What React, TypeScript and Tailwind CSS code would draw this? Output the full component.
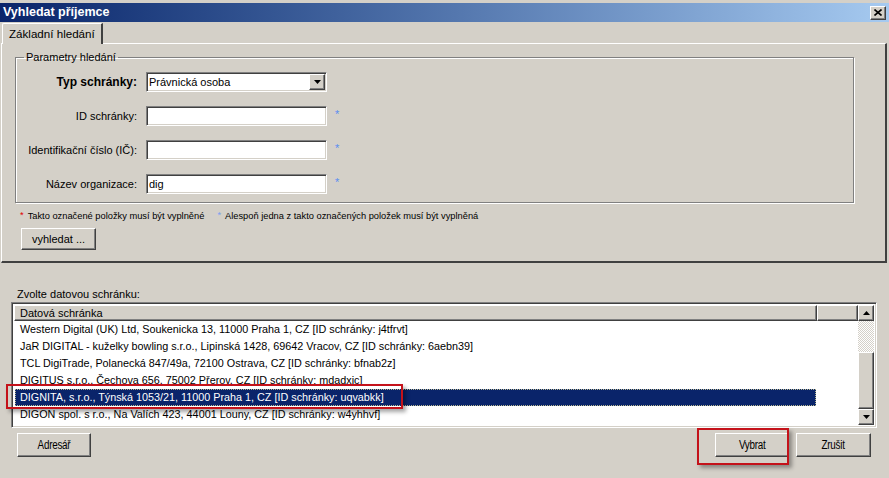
import React from "react";

const ROWS = [
  "Western Digital (UK) Ltd, Soukenicka 13, 11000 Praha 1, CZ [ID schránky: j4tfrvt]",
  "JaR DIGITAL - kuželky bowling s.r.o., Lipinská 1428, 69642 Vracov, CZ [ID schránky: 6aebn39]",
  "TCL DigiTrade, Polanecká 847/49a, 72100 Ostrava, CZ [ID schránky: bfnab2z]",
  "DIGITUS s.r.o., Čechova 656, 75002 Přerov, CZ [ID schránky: mdadxic]",
  "DIGNITA, s.r.o., Týnská 1053/21, 11000 Praha 1, CZ [ID schránky: uqvabkk]",
  "DIGON spol. s r.o., Na Valích 423, 44001 Louny, CZ [ID schránky: w4yhhvf]",
];

const raised =
  "border border-t-white border-l-white border-b-[#404040] border-r-[#404040] shadow-[inset_-1px_-1px_0_#808080]";
const sunken =
  "border border-t-[#808080] border-l-[#808080] border-b-white border-r-white shadow-[inset_1px_1px_0_#404040,inset_-1px_-1px_0_#d4d0c8]";

function Arrow({ up }: { up?: boolean }) {
  return (
    <svg width="7" height="4" viewBox="0 0 7 4">
      <path d={up ? "M3.5 0L7 4H0Z" : "M0 0H7L3.5 4Z"} fill="#000" />
    </svg>
  );
}

function Field({ label, bold, value, select }: { label: string; bold?: boolean; value?: string; select?: boolean }) {
  return (
    <div className="flex items-center h-[20px]">
      <div className={`w-[122px] text-right pr-[1px] ${bold ? "font-bold text-[12px]" : ""}`}>{label}</div>
      <div className={`ml-[8px] w-[181px] h-[20px] bg-white flex items-center ${sunken}`}>
        <span className="flex-1 pl-[2px] leading-none">{value}</span>
        {select && (
          <div className={`w-[16px] h-[16px] mr-[1px] bg-[#d4d0c8] flex items-center justify-center ${raised}`}>
            <Arrow />
          </div>
        )}
      </div>
      {!select && <span className="ml-[8px] -mt-[4px] text-[#5b8ef0] text-[11px] leading-none">*</span>}
    </div>
  );
}

export default function App() {
  return (
    <div
      className="relative w-[889px] h-[478px] bg-[#d4d0c8] text-black text-[11px] overflow-hidden flex flex-col"
      style={{ fontFamily: '"Liberation Sans", Arial, sans-serif' }}
    >
      {/* title bar */}
      <div className="h-[3px]" />
      <div className="h-[19px] flex items-center justify-between pl-[3px] pr-[3px] bg-gradient-to-r from-[#0a246a] to-[#a6caf0]">
        <span className="text-white font-bold text-[12.5px]">Vyhledat příjemce</span>
        <div className={`w-[16px] h-[14px] bg-[#d4d0c8] flex items-center justify-center ${raised}`}>
          <svg width="8" height="7" viewBox="0 0 8 7">
            <path d="M0.5 0.5L7.5 6.5M7.5 0.5L0.5 6.5" stroke="#000" strokeWidth="1.6" />
          </svg>
        </div>
      </div>

      {/* tabs */}
      <div className="mt-[1px] pl-[2px] h-[20px] flex">
        <div className="relative z-10 h-[21px] px-[6px] flex items-center bg-[#d4d0c8] border-l border-t border-white border-r-2 border-r-[#404040] rounded-tl-[2px] text-[11.6px]">
          Základní hledání
        </div>
      </div>

      <div className="ml-[1px] w-[886px] h-[220px] border-t border-l border-white border-r-2 border-r-[#404040] border-b-2 border-b-[#404040] pl-[13px] pt-[6px]">
        <fieldset className="w-[839px] h-[153px] border border-[#808080] shadow-[inset_1px_1px_0_#fff,1px_1px_0_#fff]">
          <legend className="ml-[8px] px-[2px] leading-[14px] text-[11px]">Parametry hledání</legend>
          <div className="mt-[8px] flex flex-col gap-[14px]">
            <Field label="Typ schránky:" bold value="Právnická osoba" select />
            <Field label="ID schránky:" />
            <Field label="Identifikační číslo (IČ):" />
            <Field label="Název organizace:" value="dig" />
          </div>
        </fieldset>

        <div className="mt-[8px] ml-[5px] flex items-center text-[9.3px] h-[12px]">
          <span className="text-[#e00000] mr-[4px] -mt-[2px]">*</span>
          <span>Takto označené položky musí být vyplněné</span>
          <span className="text-[#7a9ff0] ml-[13px] mr-[4px] -mt-[2px]">*</span>
          <span>Alespoň jedna z takto označených položek musí být vyplněná</span>
        </div>

        <button className={`mt-[5px] ml-[6px] w-[75px] h-[22px] bg-[#d4d0c8] text-[11px] flex items-center justify-center ${raised}`}>
          vyhledat ...
        </button>
      </div>

      {/* result list */}
      <div className="pl-[11px] mt-[24px]">
        <div className="pl-[6px] h-[15px] leading-[15px] text-[11px]">Zvolte datovou schránku:</div>
        <div className={`w-[866px] h-[126px] bg-white flex ${sunken} p-[2px]`}>
          <div className="flex-1 flex flex-col">
            <div className="flex h-[16px]">
              <div className={`w-[803px] bg-[#d4d0c8] pl-[5px] leading-[14px] text-[11px] ${raised}`}>Datová schránka</div>
              <div className={`flex-1 bg-[#d4d0c8] ${raised}`} />
            </div>
            <div className="flex flex-col text-[10.8px]">
              {ROWS.map((r, i) => (
                <div key={i} className="h-[17px] flex items-center pl-[1px]">
                  <div
                    className={
                      i === 4
                        ? "w-[801px] h-[17px] bg-[#0a246a] text-white border border-dotted border-[#b8b890] pl-[4px] leading-[15px]"
                        : "pl-[5px] leading-[17px] whitespace-nowrap"
                    }
                  >
                    {r}
                  </div>
                </div>
              ))}
            </div>
          </div>
          <div className="w-[16px] flex flex-col">
            <div className={`h-[16px] bg-[#d4d0c8] flex items-center justify-center ${raised}`}>
              <Arrow up />
            </div>
            <div className="h-[31px] bg-[repeating-conic-gradient(#d4d0c8_0_25%,#ffffff_0_50%)] bg-[length:2px_2px]" />
            <div className={`flex-1 bg-[#d4d0c8] ${raised}`} />
            <div className={`h-[16px] bg-[#d4d0c8] flex items-center justify-center ${raised}`}>
              <Arrow />
            </div>
          </div>
        </div>

        <div className="mt-[5px] flex items-center pr-[18px]">
          <button className={`ml-[6px] w-[74px] h-[24px] bg-[#d4d0c8] text-[12px] ${raised}`}>
            <span className="inline-block scale-x-[0.82] tracking-tight">Adresář</span>
          </button>
          <div className="flex-1" />
          <button className={`w-[74px] h-[24px] bg-[#d4d0c8] text-[12px] ${raised}`}>
            <span className="inline-block scale-x-[0.82] tracking-tight">Vybrat</span>
          </button>
          <button className={`ml-[7px] w-[75px] h-[24px] bg-[#d4d0c8] text-[12px] ${raised}`}>
            <span className="inline-block scale-x-[0.82] tracking-tight">Zrušit</span>
          </button>
        </div>
      </div>

      {/* annotation boxes */}
      <div className="absolute left-[6px] top-[384px] w-[397px] h-[25px] border-2 border-[#c4121a] shadow-[3px_3px_4px_rgba(0,0,0,0.35)]" />
      <div className="absolute left-[697px] top-[428px] w-[92px] h-[37px] border-2 border-[#c4121a] shadow-[3px_3px_4px_rgba(0,0,0,0.35)]" />
    </div>
  );
}
